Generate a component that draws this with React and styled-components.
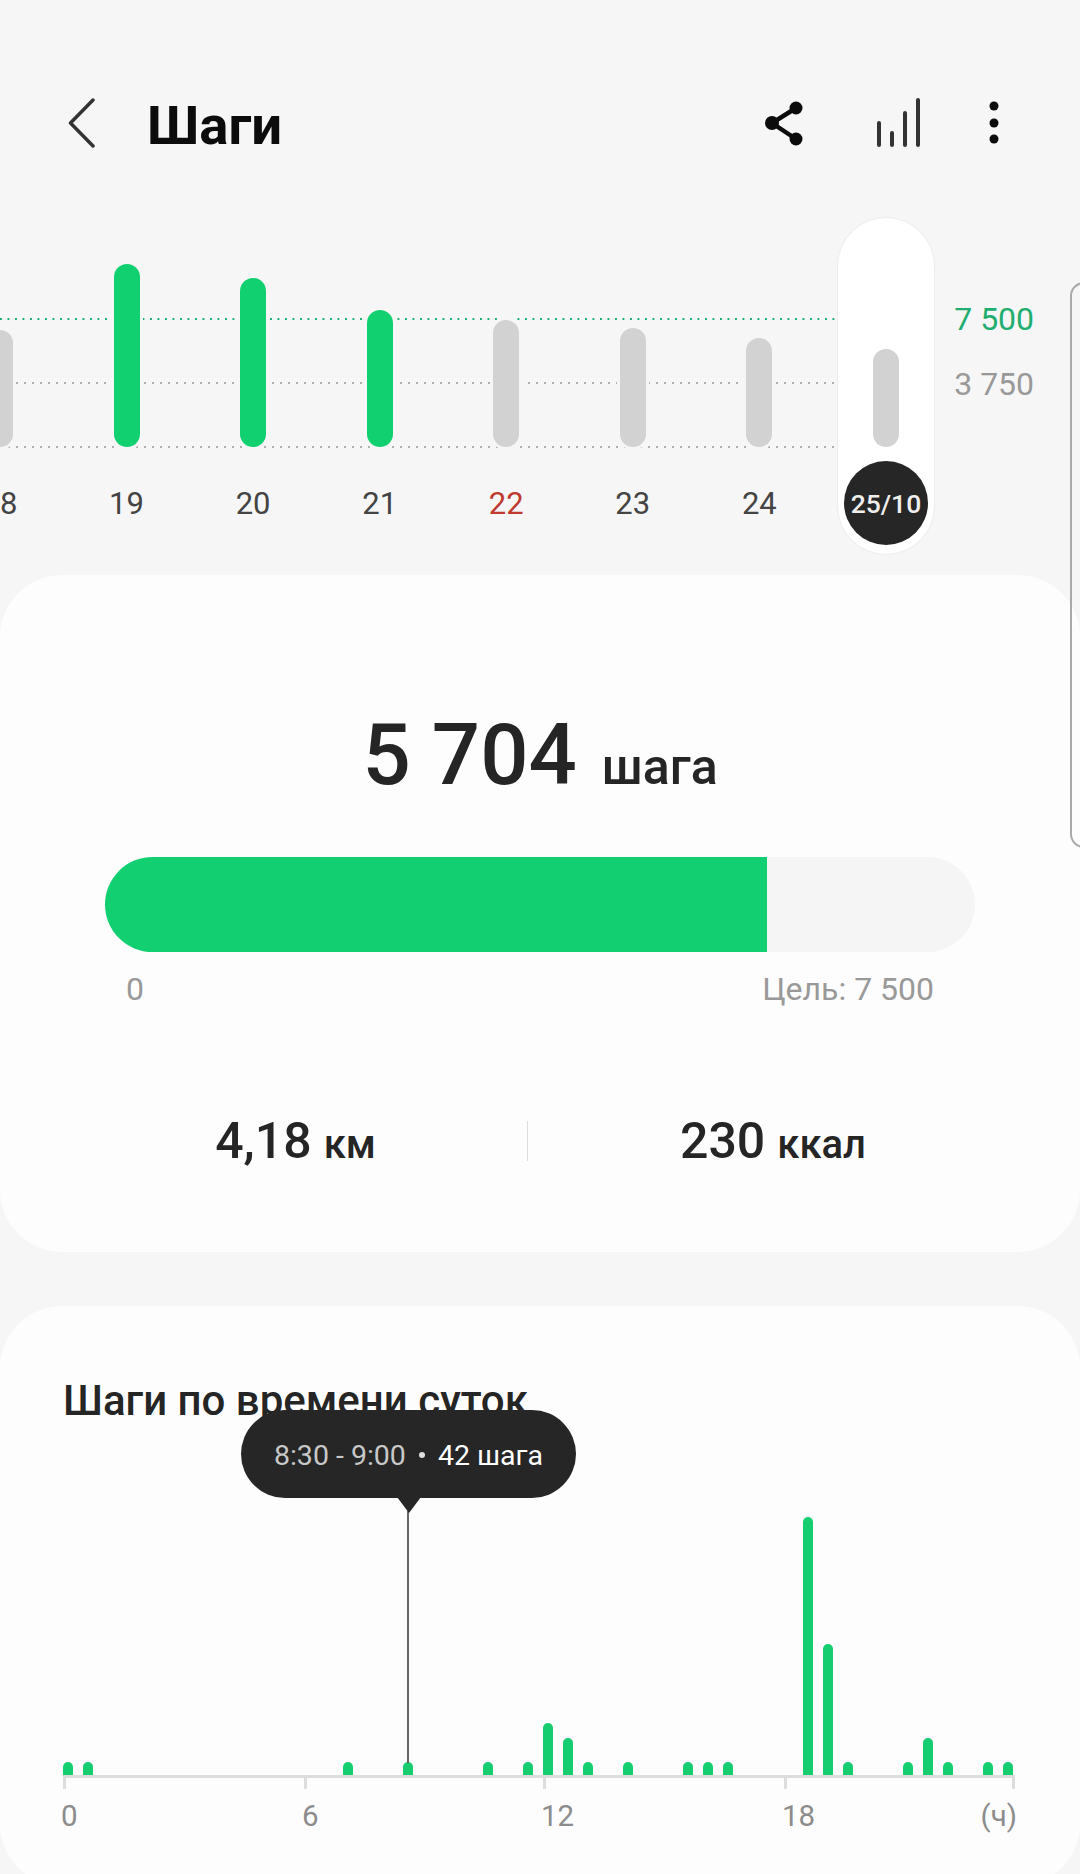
import React from "react";
import styled, { createGlobalStyle } from "styled-components";

const GlobalStyle = createGlobalStyle`
  html, body { margin: 0; padding: 0; background: #f6f6f6; }
  * { box-sizing: border-box; }
`;

const Page = styled.div`
  position: relative;
  width: 1080px;
  height: 1874px;
  overflow: hidden;
  background: #f6f6f6;
  font-family: Roboto, "Noto Sans", sans-serif;
  color: #252525;
`;

/* Top bar */
const Header = styled.header`
  display: flex;
  align-items: center;
  height: 217px;
  padding: 29px 80px 0 68px;
`;
const Title = styled.h1`
  margin: 4px 0 0 51px;
  font-size: 54.5px;
  font-weight: 700;
  line-height: 60px;
  color: #0c0c0c;
`;
const HeaderActions = styled.div`
  display: flex;
  align-items: center;
  margin-left: auto;
`;
const ActionSlot = styled.span`
  display: flex;
  margin-left: ${(p) => p.$gap}px;
`;

/* Daily steps strip */
const Trend = styled.section`
  position: relative;
  display: flex;
  height: 358px;
`;
const Guide = styled.div`
  position: absolute;
  left: 0;
  top: ${(p) => p.$top}px;
  width: 840px;
  height: 2px;
  background-image: radial-gradient(circle at 1px 1px, ${(p) => p.$color} 1px, transparent 1.2px);
  background-size: ${(p) => p.$step}px 2px;
`;
const DayRow = styled.div`
  position: relative;
  display: flex;
  flex: none;
  margin-left: -63.3px;
`;
const DayCell = styled.div`
  display: flex;
  justify-content: center;
  width: 126.57px;
`;
const DayColumn = styled.div`
  display: flex;
  flex: none;
  flex-direction: column;
  align-items: center;
  width: 98px;
  height: 338px;
  border: 1px solid ${(p) => (p.$selected ? "#ececec" : "transparent")};
  border-radius: 49px;
  background: ${(p) => (p.$selected ? "#ffffff" : "transparent")};
`;
const BarZone = styled.div`
  display: flex;
  align-items: flex-end;
  height: 229px;
`;
const DayBar = styled.div`
  width: 26px;
  border-radius: 13px;
  background: ${(p) => (p.$met ? "#11d070" : "#d2d2d2")};
  box-shadow: 0 0 0 ${(p) => (p.$halo ? "3px" : "0")} #f6f6f6;
`;
const DayLabel = styled.div`
  display: flex;
  align-items: center;
  justify-content: center;
  width: 84px;
  height: 84px;
  margin-top: 14px;
  font-size: 31px;
  color: ${(p) => (p.$holiday ? "#bf3a30" : "#444444")};
`;
const DayBadge = styled(DayLabel)`
  border-radius: 50%;
  background: #262626;
  color: #eeeeee;
  font-size: 26.5px;
  font-weight: 500;
`;
const Legend = styled.div`
  display: flex;
  flex-direction: column;
  gap: 25px;
  margin-left: 5px;
  padding-top: 82px;
`;
const LegendValue = styled.div`
  font-size: 32px;
  line-height: 40px;
  white-space: nowrap;
  color: ${(p) => p.$color};
`;

/* Sliding edge panel handle */
const EdgeHandle = styled.div`
  position: absolute;
  left: 1070px;
  top: 282px;
  width: 20px;
  height: 566px;
  border: 2px solid #a9a9a9;
  border-radius: 14px 0 0 14px;
`;

const Card = styled.section`
  background: #fdfdfd;
  border-radius: 62px;
`;

/* Summary card */
const SummaryCard = styled(Card)`
  display: flex;
  flex-direction: column;
  align-items: center;
  height: 677px;
  padding-top: 135px;
`;
const StepsLine = styled.div`
  display: flex;
  align-items: baseline;
  gap: 25px;
  line-height: 90px;
`;
const StepsValue = styled.span`
  font-size: 85px;
  font-weight: 500;
`;
const StepsUnit = styled.span`
  font-size: 50px;
  font-weight: 500;
`;
const Progress = styled.div`
  width: 870px;
  height: 95px;
  margin-top: 45px;
  border-radius: 48px;
  background: #f5f5f5;
  overflow: hidden;
`;
const ProgressFill = styled.div`
  height: 100%;
  background: #12d072;
`;
const ProgressScale = styled.div`
  display: flex;
  justify-content: space-between;
  width: 808px;
  margin: 17px 20px 0 0;
  font-size: 32px;
  line-height: 40px;
  color: #999999;
`;
const Stats = styled.div`
  display: grid;
  grid-template-columns: 463px 1px 490px;
  align-items: center;
  width: 100%;
  margin-top: 103px;
  padding-left: 64px;
`;
const Stat = styled.div`
  display: flex;
  align-items: baseline;
  justify-content: center;
  gap: 12px;
  font-weight: 500;
`;
const StatValue = styled.span`
  font-size: 50px;
`;
const StatUnit = styled.span`
  font-size: 40px;
`;
const StatDivider = styled.div`
  width: 1px;
  height: 40px;
  background: #dddddd;
`;

/* Hourly chart card */
const HourlyCard = styled(Card)`
  position: relative;
  height: 580px;
  margin-top: 54px;
  padding-top: 70px;
`;
const CardTitle = styled.h2`
  margin: 0 0 0 63px;
  font-size: 42px;
  font-weight: 500;
  line-height: 50px;
  color: #252525;
`;
const Slots = styled.div`
  display: flex;
  align-items: flex-end;
  height: 349px;
  margin-left: 58px;
`;
const Slot = styled.div`
  display: flex;
  justify-content: center;
  width: 20px;
`;
const SlotBar = styled.div`
  width: 10px;
  border-radius: 5px 5px 0 0;
  background: #16cd6f;
`;
const Axis = styled.div`
  display: grid;
  grid-template-columns: 241px 239px 241px 228px 3px;
  width: 952px;
  margin-left: 63px;
  border-top: 3px solid #dddddd;
`;
const AxisCell = styled.div`
  display: flex;
  flex-direction: column;
  align-items: ${(p) => (p.$end ? "flex-end" : "flex-start")};
`;
const AxisTick = styled.div`
  flex: none;
  width: 3px;
  height: 11px;
  background: #dddddd;
`;
const AxisLabel = styled.div`
  flex: none;
  margin: 7px ${(p) => (p.$end ? "-2px" : "0")} 0 ${(p) => (p.$end ? "0" : "-2px")};
  font-size: 29.5px;
  line-height: 40px;
  white-space: nowrap;
  color: #8c8c8c;
`;
const Tooltip = styled.div`
  position: absolute;
  left: 241px;
  top: 104px;
  display: flex;
  align-items: center;
  justify-content: center;
  gap: 13px;
  width: 335px;
  height: 88px;
  padding-top: 2px;
  border-radius: 44px;
  background: #262626;
  font-size: 28.5px;
  white-space: nowrap;
  color: #ffffff;
  &::after {
    content: "";
    position: absolute;
    left: 156px;
    top: 87px;
    border-style: solid;
    border-width: 16px 12px 0;
    border-color: #262626 transparent transparent;
  }
`;
const TooltipTime = styled.span`
  color: #c8c8c8;
`;
const TooltipDot = styled.span`
  width: 6px;
  height: 6px;
  border-radius: 50%;
  background: #e0e0e0;
`;
const Pointer = styled.div`
  position: absolute;
  left: 407px;
  top: 205px;
  width: 1.5px;
  height: 252px;
  background: #666666;
`;

const days = [
  { label: "18", height: 117 },
  { label: "19", height: 183, met: true },
  { label: "20", height: 169, met: true },
  { label: "21", height: 137, met: true },
  { label: "22", height: 127, holiday: true },
  { label: "23", height: 119 },
  { label: "24", height: 109 },
  { label: "25/10", height: 98, selected: true },
];

// Half-hour slot index -> bar height
const hourly = {
  0: 13, 1: 13, 14: 13, 17: 13, 21: 13, 23: 13, 24: 52, 25: 37, 26: 13, 28: 13,
  31: 13, 32: 13, 33: 13, 37: 258, 38: 131, 39: 13, 42: 13, 43: 37, 44: 13, 46: 13, 47: 13,
};

const ticks = ["0", "6", "12", "18"];

const BackIcon = () => (
  <svg width="28" height="50" viewBox="0 0 28 50" fill="none">
    <path d="M25 2 L2.5 25 L25 48" stroke="#333" strokeWidth="3.5" strokeLinecap="round" strokeLinejoin="round" />
  </svg>
);

const ShareIcon = () => (
  <svg width="40" height="46" viewBox="0 0 40 46" fill="#0c0c0c">
    <path d="M32 8 L8 23 L32 39" fill="none" stroke="#0c0c0c" strokeWidth="4.5" />
    <circle cx="32" cy="8" r="6.5" />
    <circle cx="8" cy="23" r="7" />
    <circle cx="32" cy="39" r="6.5" />
  </svg>
);

const TrendIcon = () => (
  <svg width="46" height="50" viewBox="0 0 46 50" fill="none" stroke="#333" strokeWidth="4" strokeLinecap="round">
    <path d="M3 25 V47 M16 35 V47 M29 15 V47 M42 2 V47" />
  </svg>
);

const MoreIcon = () => (
  <svg width="12" height="46" viewBox="0 0 12 46" fill="#0c0c0c">
    <circle cx="6" cy="6" r="4.5" />
    <circle cx="6" cy="23" r="4.5" />
    <circle cx="6" cy="39" r="4.5" />
  </svg>
);

export default function App() {
  return (
    <Page>
      <GlobalStyle />
      <Header>
        <BackIcon />
        <Title>Шаги</Title>
        <HeaderActions>
          <ShareIcon />
          <ActionSlot $gap={71.5}>
            <TrendIcon />
          </ActionSlot>
          <ActionSlot $gap={66.5}>
            <MoreIcon />
          </ActionSlot>
        </HeaderActions>
      </Header>

      <Trend>
        <Guide $top={101} $color="#14b070" $step={7.5} />
        <Guide $top={165} $color="#b0b0b0" $step={8} />
        <Guide $top={229} $color="#b0b0b0" $step={8} />
        <DayRow>
          {days.map((d) => (
            <DayCell key={d.label}>
              <DayColumn $selected={d.selected}>
                <BarZone>
                  <DayBar $met={d.met} $halo={!d.selected} style={{ height: d.height }} />
                </BarZone>
                {d.selected ? (
                  <DayBadge>{d.label}</DayBadge>
                ) : (
                  <DayLabel $holiday={d.holiday}>{d.label}</DayLabel>
                )}
              </DayColumn>
            </DayCell>
          ))}
        </DayRow>
        <Legend>
          <LegendValue $color="#1fae6f">7 500</LegendValue>
          <LegendValue $color="#999999">3 750</LegendValue>
        </Legend>
      </Trend>

      <SummaryCard>
        <StepsLine>
          <StepsValue>5 704</StepsValue>
          <StepsUnit>шага</StepsUnit>
        </StepsLine>
        <Progress>
          <ProgressFill style={{ width: `${(5704 / 7500) * 100}%` }} />
        </Progress>
        <ProgressScale>
          <span>0</span>
          <span>Цель: 7 500</span>
        </ProgressScale>
        <Stats>
          <Stat>
            <StatValue>4,18</StatValue>
            <StatUnit>км</StatUnit>
          </Stat>
          <StatDivider />
          <Stat>
            <StatValue>230</StatValue>
            <StatUnit>ккал</StatUnit>
          </Stat>
        </Stats>
      </SummaryCard>

      <HourlyCard>
        <CardTitle>Шаги по времени суток</CardTitle>
        <Slots>
          {Array.from({ length: 48 }, (_, i) => (
            <Slot key={i}>{hourly[i] ? <SlotBar style={{ height: hourly[i] }} /> : null}</Slot>
          ))}
        </Slots>
        <Axis>
          {ticks.map((t) => (
            <AxisCell key={t}>
              <AxisTick />
              <AxisLabel>{t}</AxisLabel>
            </AxisCell>
          ))}
          <AxisCell $end>
            <AxisTick />
            <AxisLabel $end>(ч)</AxisLabel>
          </AxisCell>
        </Axis>
        <Pointer />
        <Tooltip>
          <TooltipTime>8:30 - 9:00</TooltipTime>
          <TooltipDot />
          <span>42 шага</span>
        </Tooltip>
      </HourlyCard>

      <EdgeHandle />
    </Page>
  );
}
